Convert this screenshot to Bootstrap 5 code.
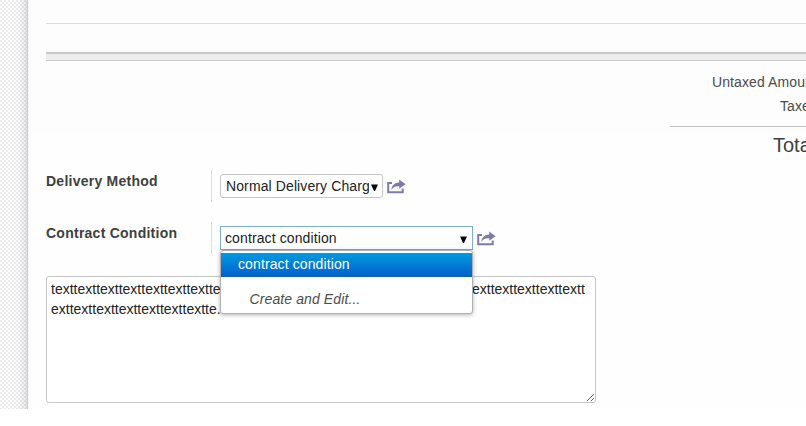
<!DOCTYPE html>
<html lang="en">
<head>
<meta charset="utf-8">
<title>Quotation</title>
<link href="https://cdn.jsdelivr.net/npm/bootstrap@5.3.0/dist/css/bootstrap.min.css" rel="stylesheet">
<style>
body { font: 14px/20px "Liberation Sans", Arial, sans-serif; color: #4c4c4c; background: #fff; overflow: hidden; }
.view { height: 409px; }
.gutter { width: 27px; background: linear-gradient(90deg, transparent 10px, rgba(90,90,110,.03) 19px, rgba(90,90,110,.15)), repeating-conic-gradient(#fff 0 25%, #ececec 0 50%) 0 0/4px 4px; }
.sheet { border-left: 1px solid #c8c8d3; background: linear-gradient(#fdfdfd 134px, #fefefe 134px); padding-left: 18px; min-width: 0; overflow: hidden; }
.line-row { height: 24px; border-bottom: 1px solid #dcdcdc; }
.line-foot { height: 28px; }
.line-bar { height: 9px; border-top: 2px solid #c8c8c8; border-bottom: 1px solid #c8c8c8; background: #ededed; }
.totals { width: 180px; height: 109px; padding-top: 11px; margin-right: -44px; }
.totals-row { height: 24px; padding-left: 42px; letter-spacing: .1px; }
.totals-tax { padding-left: 110px; height: 30px; }
.totals-sum { border-top: 1px solid #c0c0c0; padding: 8px 0 0 103px; font-size: 20px; color: #404040; }
.field-label { width: 166px; height: 32px; padding-top: 1px; border-right: 1px solid #ddd; letter-spacing: .25px; color: #404040; }
.field-row { height: 32px; margin-bottom: 20px; }
.combo { height: 24px; border: 1px solid #c6c6c6; border-radius: 3px; background: #fff; margin: 4px 0 0 8px; padding: 1px 5px 0 5px; color: #222; line-height: 21px; letter-spacing: .11px; }
.combo-delivery { width: 163px; }
.combo-contract { width: 253px; border-color: #7fa8e8; border-radius: 0; padding-left: 4px; }
.combo-arrow { width: 7px; height: 7px; margin: 8px 0 0 1px; }
.combo-delivery .combo-arrow { margin-left: 2px; margin-right: -1px; }
.open-icon { width: 19px; height: 15px; margin: 9px 0 0 4px; }
.option-menu { top: 28px; left: 8px; width: 253px; height: 64px; padding: 2px 0 0; border: 1px solid #afafb6; border-radius: 3px; background: #fff; box-shadow: 0 1px 4px rgba(0,0,0,.3); z-index: 2; letter-spacing: .11px; }
.option-active { height: 24px; padding-left: 17px; line-height: 23px; color: #fff; background: linear-gradient(#009ade, #0060cd); }
.option-create { padding: 12px 0 0 28.5px; font-style: italic; }
.note { width: 550px; height: 127px; margin-top: 22px; padding: 2px 4px; border: 1px solid #c6c6c6; border-radius: 3px; background: #fff; color: #222; word-break: break-all; resize: both; display: block; line-height: 20px; overflow: hidden; }
.field-row-last { margin-bottom: 0; }
.note:focus { outline: 0; }
</style>
<script src="https://cdn.jsdelivr.net/npm/bootstrap@5.3.0/dist/js/bootstrap.bundle.min.js"></script>
</head>
<body>
<svg class="d-none" aria-hidden="true">
  <symbol id="share" viewBox="0 0 19 15"><path d="M5 3.9H1.2V13.3H15.7V9.6" fill="none" stroke="#7c7bad" stroke-width="2"/><path d="M12.2.5 18.6 5.2 12.2 9.8V7.2C8.5 7 6.2 8 4.4 10.9 4.6 6.5 7.4 3.5 12.2 3.4Z" fill="#7c7bad"/></symbol>
  <symbol id="arrow" viewBox="0 0 7 7"><path d="M0 .5H7L4 7H3Z" fill="#000"/></symbol>
</svg>
<main class="view d-flex">
  <div class="gutter flex-shrink-0"></div>
  <section class="sheet flex-grow-1">
    <div class="line-row"></div>
    <div class="line-foot"></div>
    <div class="line-bar"></div>
    <div class="totals ms-auto text-nowrap">
      <div class="totals-row">Untaxed Amount :</div>
      <div class="totals-row totals-tax">Taxes :</div>
      <div class="totals-sum">Total :</div>
    </div>
    <div class="field-row d-flex">
      <div class="field-label fw-bold">Delivery Method</div>
      <div class="combo combo-delivery d-flex"><span class="flex-grow-1 overflow-hidden text-nowrap">Normal Delivery Charges</span><svg class="combo-arrow flex-shrink-0"><use href="#arrow"/></svg></div>
      <svg class="open-icon"><use href="#share"/></svg>
    </div>
    <div class="field-row field-row-last d-flex">
      <div class="field-label fw-bold">Contract Condition</div>
      <div class="position-relative d-flex">
        <div class="combo combo-contract d-flex"><span class="flex-grow-1">contract condition</span><svg class="combo-arrow flex-shrink-0"><use href="#arrow"/></svg></div>
        <svg class="open-icon"><use href="#share"/></svg>
        <div class="option-menu position-absolute">
          <div class="option-active">contract condition</div>
          <div class="option-create">Create and Edit...</div>
        </div>
      </div>
    </div>
    <textarea class="note" spellcheck="false">texttexttexttexttexttexttexttexttextxttexttexttexttexttexttexttexttexttexttexttexttexttexttexttexttexttexttexttexttexttextte.</textarea>
  </section>
</main>
</body>
</html>
